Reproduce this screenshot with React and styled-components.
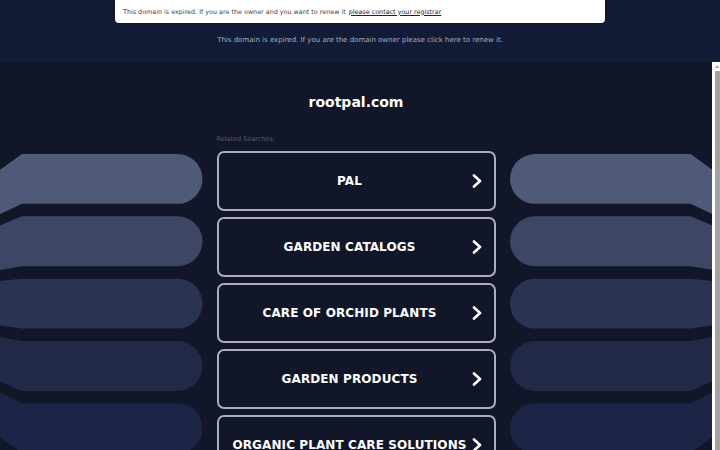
import React from "react";
import styled, { createGlobalStyle } from "styled-components";

const GlobalStyle = createGlobalStyle`
  html, body {
    margin: 0;
    padding: 0;
    height: 100%;
    background: #111629;
    font-family: "DejaVu Sans", "Liberation Sans", sans-serif;
  }
  #root {
    height: 100%;
  }
`;

const Page = styled.div`
  height: 100vh;
  display: flex;
  flex-direction: column;
  background: #111629;
`;

const Header = styled.header`
  flex: 0 0 62px;
  background: #131c37;
  display: flex;
  flex-direction: column;
  align-items: center;
`;

const Notice = styled.div`
  width: 490px;
  height: 23px;
  box-sizing: border-box;
  padding: 0 8px;
  background: #ffffff;
  border-radius: 0 0 4px 4px;
  box-shadow: 0 1px 3px rgba(0, 0, 0, 0.3);
  display: flex;
  align-items: center;
  font-size: 6.4px;
  color: #444;
  a {
    color: #222;
    text-decoration: underline;
    margin-left: 3px;
  }
`;

const RenewLine = styled.p`
  margin: 13px 0 0;
  font-size: 7px;
  color: #a7adc0;
`;

const Body = styled.div`
  flex: 1;
  min-height: 0;
  display: flex;
`;

const Scroller = styled.main`
  flex: 1;
  overflow: hidden;
`;

const ScrollRail = styled.div`
  flex: 0 0 8px;
  background: #ffffff;
  display: flex;
  flex-direction: column;
  align-items: flex-end;
  padding-top: 3px;
  box-sizing: border-box;
`;

const RailArrow = styled.div`
  width: 0;
  height: 0;
  margin-right: 1.5px;
  border-left: 2.5px solid transparent;
  border-right: 2.5px solid transparent;
  border-bottom: 3px solid #a0a0a0;
`;

const RailThumb = styled.div`
  flex: 1;
  width: 5px;
  margin-top: 3px;
  background: #a2a2a2;
`;

const Content = styled.div`
  padding: 32px 0 40px;
`;

const Domain = styled.h1`
  margin: 0;
  text-align: center;
  font-size: 14px;
  line-height: 17px;
  font-weight: bold;
  color: #ffffff;
`;

const RelatedLabel = styled.div`
  width: 279px;
  margin: 23px auto 7px;
  font-size: 6.5px;
  line-height: 10px;
  color: #535d7a;
`;

const Layout = styled.div`
  display: grid;
  grid-template-columns: 1fr 279px 1fr;
  column-gap: 14px;
`;

const Side = styled.svg`
  display: block;
  width: 100%;
  height: 330px;
`;

const Links = styled.div`
  display: flex;
  flex-direction: column;
  gap: 6px;
`;

const SearchLink = styled.a`
  height: 60px;
  box-sizing: border-box;
  border: 2px solid #acafb9;
  border-radius: 7px;
  padding: 0 12px 0 9px;
  display: flex;
  align-items: center;
  text-decoration: none;
  color: #ffffff;
`;

const LinkText = styled.span`
  flex: 1;
  text-align: center;
  font-size: 12px;
  font-weight: bold;
  letter-spacing: 0.1px;
  white-space: nowrap;
`;

const Chevron = () => (
  <svg width="10" height="14" viewBox="0 0 10 14">
    <polyline
      points="2,1.5 8,7 2,12.5"
      fill="none"
      stroke="#ffffff"
      strokeWidth="2.6"
      strokeLinecap="round"
      strokeLinejoin="round"
    />
  </svg>
);

const pillColors = ["#4f5a78", "#3d4665", "#2b3352", "#212947", "#1d2546"];

// fan of rounded bars, tails converging toward a hub off the page edge
const pillPath = (i) => {
  const hub = 150;
  const t = 3 + 62.5 * i;
  const b = t + 50;
  const tailT = hub + (t - hub) * 0.5;
  const tailB = hub + (b - hub) * 0.5;
  return `M22 ${t} L178 ${t} A25 25 0 0 1 178 ${b} L22 ${b} L-80 ${tailB} L-80 ${tailT} Z`;
};

const Decoration = ({ mirrored }) => (
  <Side viewBox="0 0 203 330" preserveAspectRatio="xMinYMin meet">
    <g transform={mirrored ? "translate(203 0) scale(-1 1)" : undefined}>
      {pillColors.map((c, i) => (
        <path key={i} d={pillPath(i)} fill={c} />
      ))}
    </g>
  </Side>
);

const searches = [
  "PAL",
  "GARDEN CATALOGS",
  "CARE OF ORCHID PLANTS",
  "GARDEN PRODUCTS",
  "ORGANIC PLANT CARE SOLUTIONS",
];

export default function App() {
  return (
    <Page>
      <GlobalStyle />
      <Header>
        <Notice>
          This domain is expired. If you are the owner and you want to renew it
          <a href="#">please contact your registrar</a>
        </Notice>
        <RenewLine>
          This domain is expired. If you are the domain owner please click here
          to renew it.
        </RenewLine>
      </Header>
      <Body>
        <Scroller>
          <Content>
            <Domain>rootpal.com</Domain>
            <RelatedLabel>Related Searches:</RelatedLabel>
            <Layout>
              <Decoration />
              <Links>
                {searches.map((s) => (
                  <SearchLink key={s} href="#">
                    <LinkText>{s}</LinkText>
                    <Chevron />
                  </SearchLink>
                ))}
              </Links>
              <Decoration mirrored />
            </Layout>
          </Content>
        </Scroller>
        <ScrollRail>
          <RailArrow />
          <RailThumb />
        </ScrollRail>
      </Body>
    </Page>
  );
}
